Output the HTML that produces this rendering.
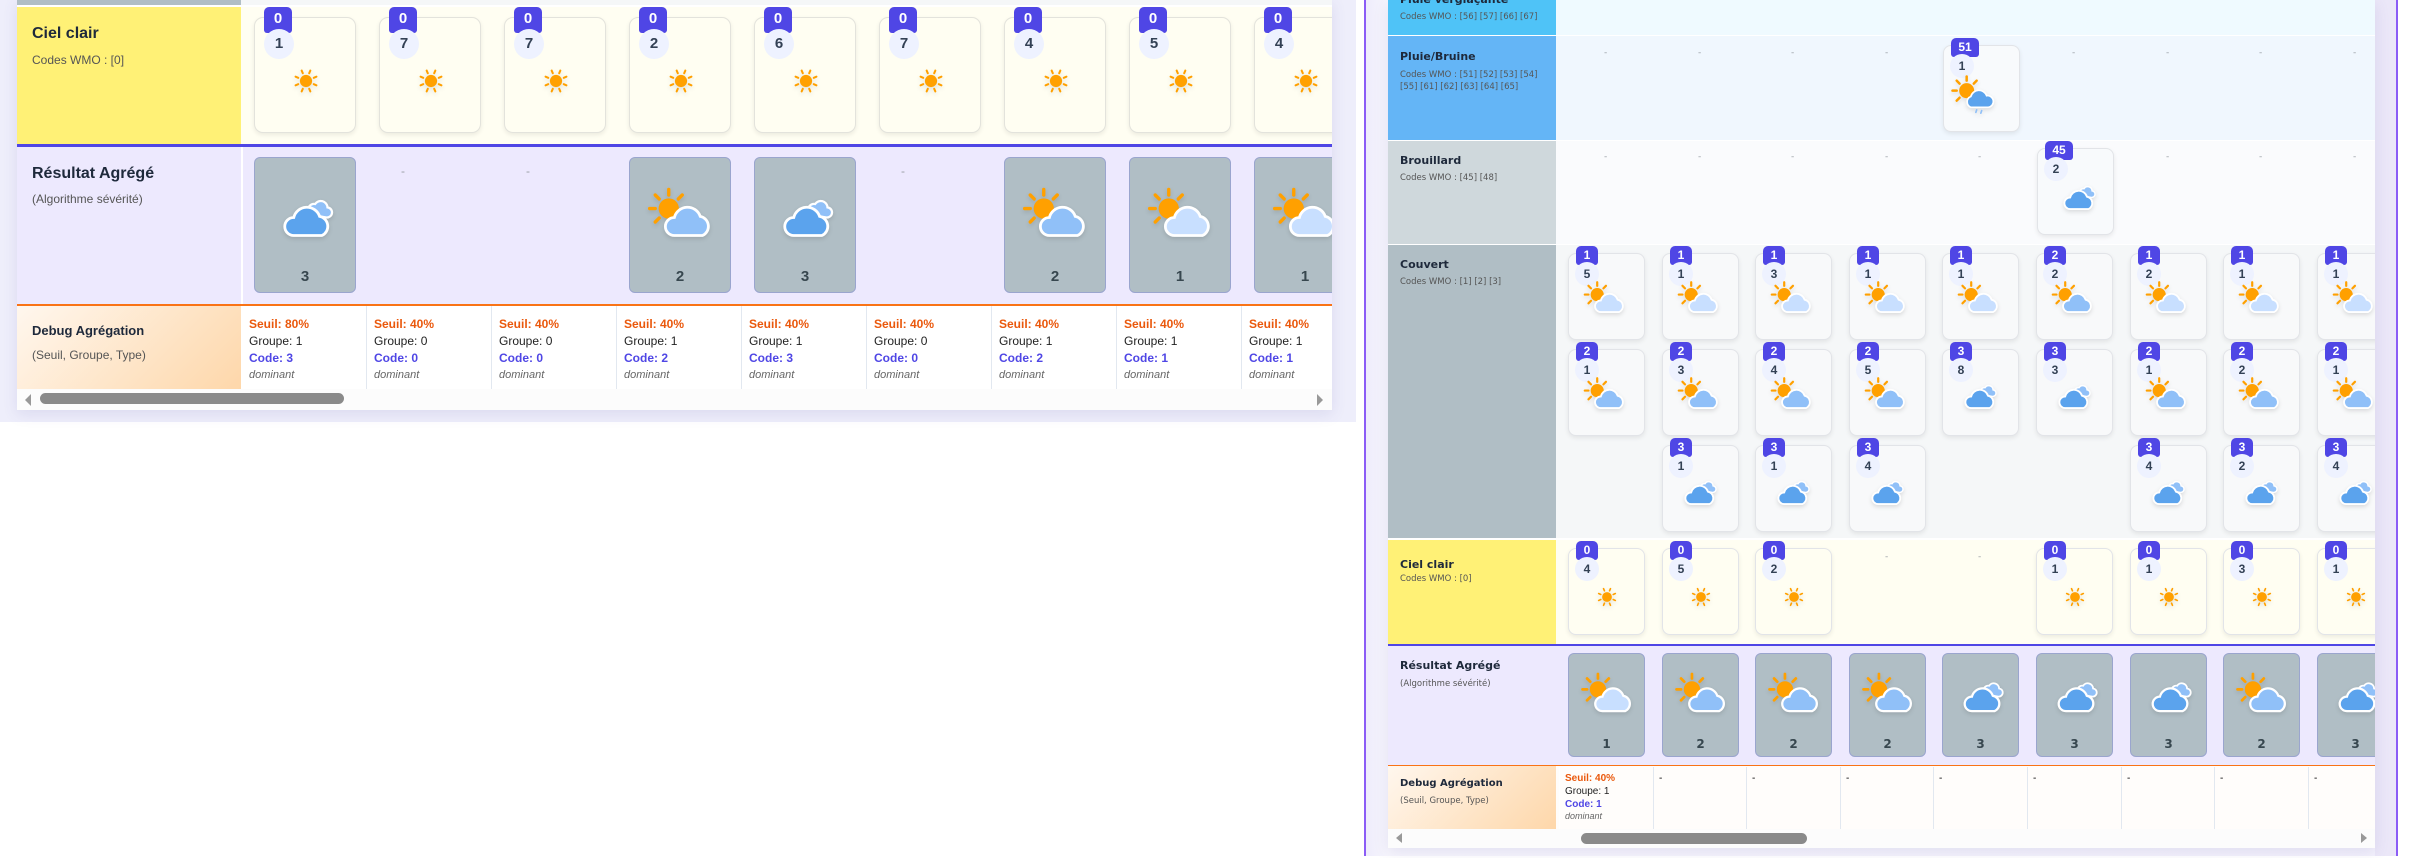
<!DOCTYPE html>
<html><head><meta charset="utf-8"><style>
*{margin:0;padding:0;box-sizing:border-box}
body{width:2412px;height:858px;position:relative;overflow:hidden;background:#fff;font-family:"Liberation Sans",Arial,sans-serif}
.a{position:absolute}
.card{position:absolute;border-radius:9px;border:1px solid #e3e3dc;box-shadow:0 2px 5px rgba(0,0,0,.08)}
.bd{position:absolute;background:#4f46e5;color:#fff;font-weight:bold;text-align:center;border-radius:5px 5px 3px 3px}
.nm{position:absolute;background:#eef2ff;color:#334155;font-weight:bold;text-align:center;border-radius:50%}
.res{position:absolute;background:#b0bec5;border:1px solid #9aa5ce;border-radius:6px}
.rn{position:absolute;left:0;right:0;text-align:center;font-weight:bold;color:#37474f}
.dash{position:absolute;color:#9aa0a6}
svg.ic{position:absolute;filter:drop-shadow(0 2px 2px rgba(0,0,0,.12))}
.dc{position:absolute;border-left:1px solid #e2e8f0}
.se{color:#ea580c;font-weight:bold}.gr{color:#222}.co{color:#4f46e5;font-weight:bold}.do{color:#666;font-style:italic}
.L .card{width:102px;height:116px;top:17px;background:#fffef2}
.L .bd{left:9px;top:-11px;width:28px;height:26px;font-size:15px;line-height:24px}
.L .nm{left:9px;top:11px;width:30px;height:30px;font-size:15px;line-height:30px}
.L .res{width:102px;height:136px;top:157px}
.L .dc{top:306px;width:125px;height:83px;padding:10px 7px;font-size:12px;line-height:17px}
.R{font-family:"DejaVu Sans","Liberation Sans",sans-serif}
.R .card{width:77px;height:87px;border-radius:8px;border-color:#e2e4e8}
.R .bd{left:7px;top:-8px;width:22px;height:19px;font-size:12px;line-height:19px;font-family:"Liberation Sans",sans-serif}
.R .nm{left:6px;top:8px;width:24px;height:24px;font-size:12px;line-height:24px;font-family:"Liberation Sans",sans-serif}
.R .res{width:77px;height:104px;top:653px}
.R .dc{top:767px;width:94px;height:62px;padding:5px 5px;font-size:10px;line-height:13px;font-family:"Liberation Sans",sans-serif}
.lt{position:absolute;font-weight:bold;color:#1e293b}
.ls{position:absolute;color:#555}
</style></head><body>
<svg width="0" height="0" style="position:absolute">
<defs>
<symbol id="sun" viewBox="0 0 32 32"><g stroke="#ffa000" stroke-width="2.2" stroke-linecap="round"><line x1="24.3" y1="19.4" x2="27.1" y2="20.6"/><line x1="19.4" y1="24.3" x2="20.6" y2="27.1"/><line x1="12.6" y1="24.3" x2="11.4" y2="27.1"/><line x1="7.7" y1="19.4" x2="4.9" y2="20.6"/><line x1="7.7" y1="12.6" x2="4.9" y2="11.4"/><line x1="12.6" y1="7.7" x2="11.4" y2="4.9"/><line x1="19.4" y1="7.7" x2="20.6" y2="4.9"/><line x1="24.3" y1="12.6" x2="27.1" y2="11.4"/></g><circle cx="16" cy="16" r="6.5" fill="#ffa000"/></symbol>
<symbol id="sunray" viewBox="0 0 64 48"><g stroke="#ffa000" stroke-width="3" stroke-linecap="round"><line x1="10" y1="20" x2="5" y2="20"/><line x1="13.5" y1="11.5" x2="10" y2="8"/><line x1="22" y1="8" x2="22" y2="3"/><line x1="30.5" y1="11.5" x2="34" y2="8"/><line x1="13.5" y1="28.5" x2="10" y2="32"/></g><circle cx="22" cy="20" r="9" fill="#ffa000"/></symbol>
<symbol id="sc1" viewBox="0 0 64 48"><use href="#sunray"/><path d="M27 44 A8 8 0 0 1 27 28 A12 12 0 0 1 50 27 A9 9 0 0 1 52 44 Z" fill="#c8dfff" stroke="#fff" stroke-width="2.5"/></symbol>
<symbol id="sc2" viewBox="0 0 64 48"><use href="#sunray"/><path d="M27 44 A8 8 0 0 1 27 28 A12 12 0 0 1 50 27 A9 9 0 0 1 52 44 Z" fill="#90c0f8" stroke="#fff" stroke-width="2.5"/></symbol>
<symbol id="cl" viewBox="0 0 64 48"><path d="M39 26 A5 5 0 0 1 41 16 A6 6 0 0 1 52 19 A4.5 4.5 0 0 1 51 28 Z" fill="#90c0f8" stroke="#fff" stroke-width="2"/><path d="M22 44 A8 8 0 0 1 22 28 A12 12 0 0 1 45 27 A9 9 0 0 1 47 44 Z" fill="#5ba3ed" stroke="#fff" stroke-width="2.5"/></symbol>
<symbol id="rain" viewBox="0 0 64 48"><use href="#sunray"/><path d="M27 40 A7 7 0 0 1 27 27 A10 10 0 0 1 46 26 A7 7 0 0 1 48 40 Z" fill="#5ba3ed" stroke="#fff" stroke-width="2"/><g stroke="#90c0f8" stroke-width="2" stroke-linecap="round"><line x1="34" y1="43" x2="33" y2="46"/><line x1="40" y1="44" x2="39" y2="47"/></g></symbol>
</defs></svg>

<!-- LEFT PANEL -->
<div class="a" style="left:0;top:0;width:1356px;height:422px;background:#eeeefb"></div>
<div class="a L" style="left:17px;top:0;width:1315px;height:410px;background:#fff;overflow:hidden;box-shadow:0 4px 14px rgba(80,70,160,.12)">
<div class="a" style="left:0;top:0;width:224px;height:5px;background:#b0bec5"></div>
<div class="a" style="left:224px;top:0;width:1100px;height:5px;background:#f5f7f8"></div>
<div class="a" style="left:0;top:7px;width:224px;height:137px;background:#fff176"></div>
<div class="a" style="left:224px;top:7px;width:1100px;height:137px;background:#fffef2"></div>
<div class="a" style="left:0;top:144px;width:1320px;height:3px;background:#4f46e5"></div>
<div class="a" style="left:0;top:147px;width:1320px;height:157px;background:#ede9fe"></div>
<div class="a" style="left:224px;top:147px;width:2px;height:157px;background:#fff"></div>
<div class="a" style="left:0;top:304px;width:1320px;height:2px;background:#f97316"></div>
<div class="a" style="left:0;top:306px;width:224px;height:83px;background:linear-gradient(135deg,#fff7ee,#fed7aa)"></div>
<div class="a" style="left:0;top:389px;width:1320px;height:21px;background:#fcfcfc"></div>
<div class="a" style="left:8px;top:394px;width:0;height:0;border-top:6px solid transparent;border-bottom:6px solid transparent;border-right:6px solid #999"></div>
<div class="a" style="left:23px;top:393px;width:304px;height:11px;border-radius:6px;background:#8a8a8a"></div>
<div class="a" style="left:1300px;top:394px;width:0;height:0;border-top:6px solid transparent;border-bottom:6px solid transparent;border-left:6px solid #999"></div>

<div class="lt" style="left:15px;top:25px;font-size:16px">Ciel clair</div>
<div class="ls" style="left:15px;top:53px;font-size:12px">Codes WMO : [0]</div>
<div class="lt" style="left:15px;top:165px;font-size:16px">Résultat Agrégé</div>
<div class="ls" style="left:15px;top:192px;font-size:12px">(Algorithme sévérité)</div>
<div class="lt" style="left:15px;top:323px;font-size:13px">Debug Agrégation</div>
<div class="ls" style="left:15px;top:348px;font-size:12px">(Seuil, Groupe, Type)</div>

<div class="card" style="left:237px"><div class="bd">0</div><div class="nm">1</div><svg class="ic" style="left:36px;top:48px" width="30" height="30"><use href="#sun"/></svg></div>
<div class="card" style="left:362px"><div class="bd">0</div><div class="nm">7</div><svg class="ic" style="left:36px;top:48px" width="30" height="30"><use href="#sun"/></svg></div>
<div class="card" style="left:487px"><div class="bd">0</div><div class="nm">7</div><svg class="ic" style="left:36px;top:48px" width="30" height="30"><use href="#sun"/></svg></div>
<div class="card" style="left:612px"><div class="bd">0</div><div class="nm">2</div><svg class="ic" style="left:36px;top:48px" width="30" height="30"><use href="#sun"/></svg></div>
<div class="card" style="left:737px"><div class="bd">0</div><div class="nm">6</div><svg class="ic" style="left:36px;top:48px" width="30" height="30"><use href="#sun"/></svg></div>
<div class="card" style="left:862px"><div class="bd">0</div><div class="nm">7</div><svg class="ic" style="left:36px;top:48px" width="30" height="30"><use href="#sun"/></svg></div>
<div class="card" style="left:987px"><div class="bd">0</div><div class="nm">4</div><svg class="ic" style="left:36px;top:48px" width="30" height="30"><use href="#sun"/></svg></div>
<div class="card" style="left:1112px"><div class="bd">0</div><div class="nm">5</div><svg class="ic" style="left:36px;top:48px" width="30" height="30"><use href="#sun"/></svg></div>
<div class="card" style="left:1237px"><div class="bd">0</div><div class="nm">4</div><svg class="ic" style="left:36px;top:48px" width="30" height="30"><use href="#sun"/></svg></div>

<div class="res" style="left:237px"><svg class="ic" style="left:14px;top:28px" width="72" height="54"><use href="#cl"/></svg><div class="rn" style="top:110px;font-size:15px">3</div></div>
<div class="dash" style="left:384px;top:164px;font-size:12px">-</div>
<div class="dash" style="left:509px;top:164px;font-size:12px">-</div>
<div class="res" style="left:612px"><svg class="ic" style="left:14px;top:28px" width="72" height="54"><use href="#sc2"/></svg><div class="rn" style="top:110px;font-size:15px">2</div></div>
<div class="res" style="left:737px"><svg class="ic" style="left:14px;top:28px" width="72" height="54"><use href="#cl"/></svg><div class="rn" style="top:110px;font-size:15px">3</div></div>
<div class="dash" style="left:884px;top:164px;font-size:12px">-</div>
<div class="res" style="left:987px"><svg class="ic" style="left:14px;top:28px" width="72" height="54"><use href="#sc2"/></svg><div class="rn" style="top:110px;font-size:15px">2</div></div>
<div class="res" style="left:1112px"><svg class="ic" style="left:14px;top:28px" width="72" height="54"><use href="#sc1"/></svg><div class="rn" style="top:110px;font-size:15px">1</div></div>
<div class="res" style="left:1237px"><svg class="ic" style="left:14px;top:28px" width="72" height="54"><use href="#sc1"/></svg><div class="rn" style="top:110px;font-size:15px">1</div></div>

<div class="dc" style="left:224px;border-left-color:#fff"><div class="se">Seuil: 80%</div><div class="gr">Groupe: 1</div><div class="co">Code: 3</div><div class="do" style="font-size:11px">dominant</div></div>
<div class="dc" style="left:349px"><div class="se">Seuil: 40%</div><div class="gr">Groupe: 0</div><div class="co">Code: 0</div><div class="do" style="font-size:11px">dominant</div></div>
<div class="dc" style="left:474px"><div class="se">Seuil: 40%</div><div class="gr">Groupe: 0</div><div class="co">Code: 0</div><div class="do" style="font-size:11px">dominant</div></div>
<div class="dc" style="left:599px"><div class="se">Seuil: 40%</div><div class="gr">Groupe: 1</div><div class="co">Code: 2</div><div class="do" style="font-size:11px">dominant</div></div>
<div class="dc" style="left:724px"><div class="se">Seuil: 40%</div><div class="gr">Groupe: 1</div><div class="co">Code: 3</div><div class="do" style="font-size:11px">dominant</div></div>
<div class="dc" style="left:849px"><div class="se">Seuil: 40%</div><div class="gr">Groupe: 0</div><div class="co">Code: 0</div><div class="do" style="font-size:11px">dominant</div></div>
<div class="dc" style="left:974px"><div class="se">Seuil: 40%</div><div class="gr">Groupe: 1</div><div class="co">Code: 2</div><div class="do" style="font-size:11px">dominant</div></div>
<div class="dc" style="left:1099px"><div class="se">Seuil: 40%</div><div class="gr">Groupe: 1</div><div class="co">Code: 1</div><div class="do" style="font-size:11px">dominant</div></div>
<div class="dc" style="left:1224px"><div class="se">Seuil: 40%</div><div class="gr">Groupe: 1</div><div class="co">Code: 1</div><div class="do" style="font-size:11px">dominant</div></div>
</div>

<!-- RIGHT PANEL frame -->
<div class="a" style="left:1364px;top:0;width:2px;height:856px;background:#8b5cf6"></div>
<div class="a" style="left:1366px;top:0;width:1030px;height:856px;background:linear-gradient(90deg,#eeecfb,#f7f6fd 22px,#f3f1fc)"></div>
<div class="a" style="left:2375px;top:0;width:21px;height:856px;background:#ebe7f8"></div>
<div class="a" style="left:2396px;top:0;width:2px;height:856px;background:#8b5cf6"></div>

<div class="a R" style="left:1388px;top:0;width:987px;height:848px;background:#fff;overflow:hidden;box-shadow:0 4px 14px rgba(80,70,160,.12)">
<div class="a" style="left:0;top:0;width:168px;height:35px;background:#4fc3f7"></div>
<div class="a" style="left:168px;top:0;width:820px;height:35px;background:#effaff"></div>
<div class="a" style="left:0;top:36px;width:168px;height:104px;background:#64b5f6"></div>
<div class="a" style="left:168px;top:36px;width:820px;height:104px;background:#f0f7fe"></div>
<div class="a" style="left:0;top:141px;width:168px;height:103px;background:#cfd8dc"></div>
<div class="a" style="left:168px;top:141px;width:820px;height:103px;background:#fafbfd"></div>
<div class="a" style="left:0;top:245px;width:168px;height:293px;background:#b0bec5"></div>
<div class="a" style="left:168px;top:245px;width:820px;height:293px;background:#f5f7f8"></div>
<div class="a" style="left:0;top:540px;width:168px;height:104px;background:#fff176"></div>
<div class="a" style="left:168px;top:540px;width:820px;height:104px;background:#fffef2"></div>
<div class="a" style="left:0;top:644px;width:990px;height:2px;background:#4f46e5"></div>
<div class="a" style="left:0;top:646px;width:990px;height:119px;background:#ede9fe"></div>
<div class="a" style="left:0;top:765px;width:990px;height:1px;background:#f97316"></div>
<div class="a" style="left:0;top:766px;width:168px;height:63px;background:linear-gradient(135deg,#fff7ee,#fed7aa)"></div>
<div class="a" style="left:168px;top:766px;width:820px;height:63px;background:#fffdfb"></div>
<div class="a" style="left:0;top:829px;width:990px;height:19px;background:#fcfcfc"></div>
<div class="a" style="left:8px;top:833px;width:0;height:0;border-top:5px solid transparent;border-bottom:5px solid transparent;border-right:6px solid #999"></div>
<div class="a" style="left:193px;top:833px;width:226px;height:11px;border-radius:6px;background:#8a8a8a"></div>
<div class="a" style="left:973px;top:833px;width:0;height:0;border-top:5px solid transparent;border-bottom:5px solid transparent;border-left:6px solid #999"></div>

<div class="lt" style="left:12px;top:-7px;font-size:11px">Pluie verglaçante</div>
<div class="ls" style="left:12px;top:12px;font-size:8.5px">Codes WMO : [56] [57] [66] [67]</div>
<div class="lt" style="left:12px;top:50px;font-size:11px">Pluie/Bruine</div>
<div class="ls" style="left:12px;top:69px;font-size:8.5px;line-height:12px;width:156px">Codes WMO : [51] [52] [53] [54] [55] [61] [62] [63] [64] [65]</div>
<div class="lt" style="left:12px;top:154px;font-size:11px">Brouillard</div>
<div class="ls" style="left:12px;top:173px;font-size:8.5px">Codes WMO : [45] [48]</div>
<div class="lt" style="left:12px;top:258px;font-size:11px">Couvert</div>
<div class="ls" style="left:12px;top:277px;font-size:8.5px">Codes WMO : [1] [2] [3]</div>
<div class="lt" style="left:12px;top:558px;font-size:11px">Ciel clair</div>
<div class="ls" style="left:12px;top:574px;font-size:8.5px">Codes WMO : [0]</div>
<div class="lt" style="left:12px;top:659px;font-size:11px">Résultat Agrégé</div>
<div class="ls" style="left:12px;top:679px;font-size:8.5px">(Algorithme sévérité)</div>
<div class="lt" style="left:12px;top:778px;font-size:10px">Debug Agrégation</div>
<div class="ls" style="left:12px;top:796px;font-size:8.5px">(Seuil, Groupe, Type)</div>

<div class="dash" style="left:216px;top:48px;font-size:9px">-</div>
<div class="dash" style="left:310px;top:48px;font-size:9px">-</div>
<div class="dash" style="left:403px;top:48px;font-size:9px">-</div>
<div class="dash" style="left:497px;top:48px;font-size:9px">-</div>
<div class="dash" style="left:684px;top:48px;font-size:9px">-</div>
<div class="dash" style="left:778px;top:48px;font-size:9px">-</div>
<div class="dash" style="left:871px;top:48px;font-size:9px">-</div>
<div class="dash" style="left:965px;top:48px;font-size:9px">-</div>
<div class="card" style="left:555px;top:45px;background:#f8fafc"><div class="bd" style="width:28px">51</div><div class="nm">1</div><svg class="ic" style="left:4px;top:28px" width="54" height="40"><use href="#rain"/></svg></div>
<div class="dash" style="left:216px;top:152px;font-size:9px">-</div>
<div class="dash" style="left:310px;top:152px;font-size:9px">-</div>
<div class="dash" style="left:403px;top:152px;font-size:9px">-</div>
<div class="dash" style="left:497px;top:152px;font-size:9px">-</div>
<div class="dash" style="left:590px;top:152px;font-size:9px">-</div>
<div class="dash" style="left:778px;top:152px;font-size:9px">-</div>
<div class="dash" style="left:871px;top:152px;font-size:9px">-</div>
<div class="dash" style="left:965px;top:152px;font-size:9px">-</div>
<div class="card" style="left:649px;top:148px;background:#f8fafc"><div class="bd" style="width:28px">45</div><div class="nm">2</div><svg class="ic" style="left:16px;top:28px" width="47" height="35"><use href="#cl"/></svg></div>

<div class="card" style="left:180px;top:253px;background:#f8f9fa"><div class="bd">1</div><div class="nm">5</div><svg class="ic" style="left:12px;top:26px" width="47" height="35"><use href="#sc1"/></svg></div>
<div class="card" style="left:274px;top:253px;background:#f8f9fa"><div class="bd">1</div><div class="nm">1</div><svg class="ic" style="left:12px;top:26px" width="47" height="35"><use href="#sc1"/></svg></div>
<div class="card" style="left:367px;top:253px;background:#f8f9fa"><div class="bd">1</div><div class="nm">3</div><svg class="ic" style="left:12px;top:26px" width="47" height="35"><use href="#sc1"/></svg></div>
<div class="card" style="left:461px;top:253px;background:#f8f9fa"><div class="bd">1</div><div class="nm">1</div><svg class="ic" style="left:12px;top:26px" width="47" height="35"><use href="#sc1"/></svg></div>
<div class="card" style="left:554px;top:253px;background:#f8f9fa"><div class="bd">1</div><div class="nm">1</div><svg class="ic" style="left:12px;top:26px" width="47" height="35"><use href="#sc1"/></svg></div>
<div class="card" style="left:648px;top:253px;background:#f8f9fa"><div class="bd">2</div><div class="nm">2</div><svg class="ic" style="left:12px;top:26px" width="47" height="35"><use href="#sc2"/></svg></div>
<div class="card" style="left:742px;top:253px;background:#f8f9fa"><div class="bd">1</div><div class="nm">2</div><svg class="ic" style="left:12px;top:26px" width="47" height="35"><use href="#sc1"/></svg></div>
<div class="card" style="left:835px;top:253px;background:#f8f9fa"><div class="bd">1</div><div class="nm">1</div><svg class="ic" style="left:12px;top:26px" width="47" height="35"><use href="#sc1"/></svg></div>
<div class="card" style="left:929px;top:253px;background:#f8f9fa"><div class="bd">1</div><div class="nm">1</div><svg class="ic" style="left:12px;top:26px" width="47" height="35"><use href="#sc1"/></svg></div>
<div class="card" style="left:180px;top:349px;background:#f8f9fa"><div class="bd">2</div><div class="nm">1</div><svg class="ic" style="left:12px;top:26px" width="47" height="35"><use href="#sc2"/></svg></div>
<div class="card" style="left:274px;top:349px;background:#f8f9fa"><div class="bd">2</div><div class="nm">3</div><svg class="ic" style="left:12px;top:26px" width="47" height="35"><use href="#sc2"/></svg></div>
<div class="card" style="left:367px;top:349px;background:#f8f9fa"><div class="bd">2</div><div class="nm">4</div><svg class="ic" style="left:12px;top:26px" width="47" height="35"><use href="#sc2"/></svg></div>
<div class="card" style="left:461px;top:349px;background:#f8f9fa"><div class="bd">2</div><div class="nm">5</div><svg class="ic" style="left:12px;top:26px" width="47" height="35"><use href="#sc2"/></svg></div>
<div class="card" style="left:554px;top:349px;background:#f8f9fa"><div class="bd">3</div><div class="nm">8</div><svg class="ic" style="left:12px;top:26px" width="47" height="35"><use href="#cl"/></svg></div>
<div class="card" style="left:648px;top:349px;background:#f8f9fa"><div class="bd">3</div><div class="nm">3</div><svg class="ic" style="left:12px;top:26px" width="47" height="35"><use href="#cl"/></svg></div>
<div class="card" style="left:742px;top:349px;background:#f8f9fa"><div class="bd">2</div><div class="nm">1</div><svg class="ic" style="left:12px;top:26px" width="47" height="35"><use href="#sc2"/></svg></div>
<div class="card" style="left:835px;top:349px;background:#f8f9fa"><div class="bd">2</div><div class="nm">2</div><svg class="ic" style="left:12px;top:26px" width="47" height="35"><use href="#sc2"/></svg></div>
<div class="card" style="left:929px;top:349px;background:#f8f9fa"><div class="bd">2</div><div class="nm">1</div><svg class="ic" style="left:12px;top:26px" width="47" height="35"><use href="#sc2"/></svg></div>
<div class="card" style="left:274px;top:445px;background:#f8f9fa"><div class="bd">3</div><div class="nm">1</div><svg class="ic" style="left:12px;top:26px" width="47" height="35"><use href="#cl"/></svg></div>
<div class="card" style="left:367px;top:445px;background:#f8f9fa"><div class="bd">3</div><div class="nm">1</div><svg class="ic" style="left:12px;top:26px" width="47" height="35"><use href="#cl"/></svg></div>
<div class="card" style="left:461px;top:445px;background:#f8f9fa"><div class="bd">3</div><div class="nm">4</div><svg class="ic" style="left:12px;top:26px" width="47" height="35"><use href="#cl"/></svg></div>
<div class="card" style="left:742px;top:445px;background:#f8f9fa"><div class="bd">3</div><div class="nm">4</div><svg class="ic" style="left:12px;top:26px" width="47" height="35"><use href="#cl"/></svg></div>
<div class="card" style="left:835px;top:445px;background:#f8f9fa"><div class="bd">3</div><div class="nm">2</div><svg class="ic" style="left:12px;top:26px" width="47" height="35"><use href="#cl"/></svg></div>
<div class="card" style="left:929px;top:445px;background:#f8f9fa"><div class="bd">3</div><div class="nm">4</div><svg class="ic" style="left:12px;top:26px" width="47" height="35"><use href="#cl"/></svg></div>

<div class="card" style="left:180px;top:548px;background:#fffef2"><div class="bd">0</div><div class="nm">4</div><svg class="ic" style="left:26px;top:36px" width="24" height="24"><use href="#sun"/></svg></div>
<div class="card" style="left:274px;top:548px;background:#fffef2"><div class="bd">0</div><div class="nm">5</div><svg class="ic" style="left:26px;top:36px" width="24" height="24"><use href="#sun"/></svg></div>
<div class="card" style="left:367px;top:548px;background:#fffef2"><div class="bd">0</div><div class="nm">2</div><svg class="ic" style="left:26px;top:36px" width="24" height="24"><use href="#sun"/></svg></div>
<div class="dash" style="left:497px;top:552px;font-size:9px">-</div>
<div class="dash" style="left:590px;top:552px;font-size:9px">-</div>
<div class="card" style="left:648px;top:548px;background:#fffef2"><div class="bd">0</div><div class="nm">1</div><svg class="ic" style="left:26px;top:36px" width="24" height="24"><use href="#sun"/></svg></div>
<div class="card" style="left:742px;top:548px;background:#fffef2"><div class="bd">0</div><div class="nm">1</div><svg class="ic" style="left:26px;top:36px" width="24" height="24"><use href="#sun"/></svg></div>
<div class="card" style="left:835px;top:548px;background:#fffef2"><div class="bd">0</div><div class="nm">3</div><svg class="ic" style="left:26px;top:36px" width="24" height="24"><use href="#sun"/></svg></div>
<div class="card" style="left:929px;top:548px;background:#fffef2"><div class="bd">0</div><div class="nm">1</div><svg class="ic" style="left:26px;top:36px" width="24" height="24"><use href="#sun"/></svg></div>

<div class="res" style="left:180px"><svg class="ic" style="left:9px;top:17px" width="58" height="44"><use href="#sc1"/></svg><div class="rn" style="top:83px;font-size:12px">1</div></div>
<div class="res" style="left:274px"><svg class="ic" style="left:9px;top:17px" width="58" height="44"><use href="#sc2"/></svg><div class="rn" style="top:83px;font-size:12px">2</div></div>
<div class="res" style="left:367px"><svg class="ic" style="left:9px;top:17px" width="58" height="44"><use href="#sc2"/></svg><div class="rn" style="top:83px;font-size:12px">2</div></div>
<div class="res" style="left:461px"><svg class="ic" style="left:9px;top:17px" width="58" height="44"><use href="#sc2"/></svg><div class="rn" style="top:83px;font-size:12px">2</div></div>
<div class="res" style="left:554px"><svg class="ic" style="left:9px;top:17px" width="58" height="44"><use href="#cl"/></svg><div class="rn" style="top:83px;font-size:12px">3</div></div>
<div class="res" style="left:648px"><svg class="ic" style="left:9px;top:17px" width="58" height="44"><use href="#cl"/></svg><div class="rn" style="top:83px;font-size:12px">3</div></div>
<div class="res" style="left:742px"><svg class="ic" style="left:9px;top:17px" width="58" height="44"><use href="#cl"/></svg><div class="rn" style="top:83px;font-size:12px">3</div></div>
<div class="res" style="left:835px"><svg class="ic" style="left:9px;top:17px" width="58" height="44"><use href="#sc2"/></svg><div class="rn" style="top:83px;font-size:12px">2</div></div>
<div class="res" style="left:929px"><svg class="ic" style="left:9px;top:17px" width="58" height="44"><use href="#cl"/></svg><div class="rn" style="top:83px;font-size:12px">3</div></div>

<div class="dc" style="left:171px;border-left-color:#fff"><div class="se">Seuil: 40%</div><div class="gr">Groupe: 1</div><div class="co">Code: 1</div><div class="do" style="font-size:9px;line-height:11px">dominant</div></div>
<div class="dc" style="left:265px">-</div>
<div class="dc" style="left:358px">-</div>
<div class="dc" style="left:452px">-</div>
<div class="dc" style="left:545px">-</div>
<div class="dc" style="left:639px">-</div>
<div class="dc" style="left:733px">-</div>
<div class="dc" style="left:826px">-</div>
<div class="dc" style="left:920px">-</div>
</div>
</body></html>
